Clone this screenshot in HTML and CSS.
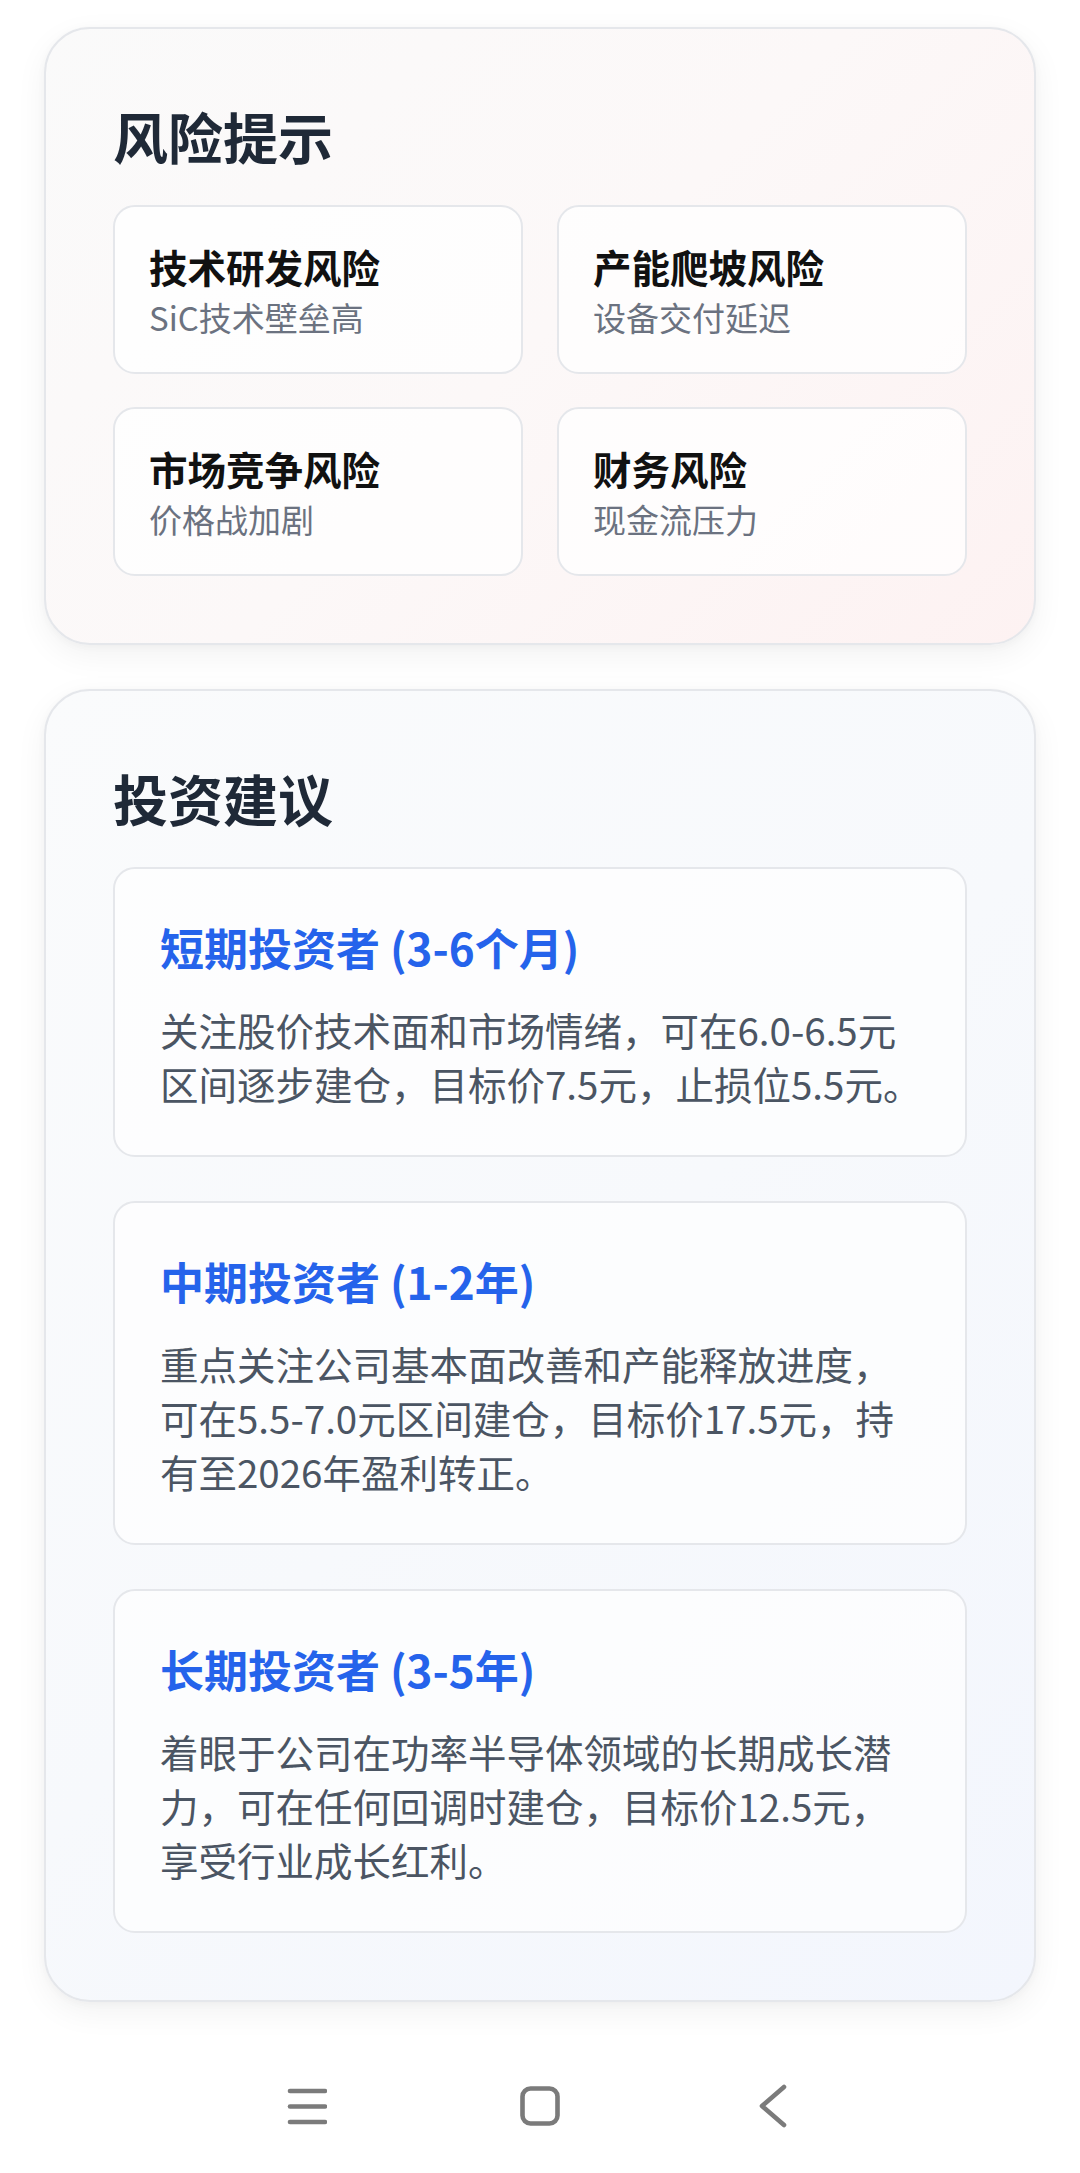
FILE: index.html
```html
<!DOCTYPE html>
<html lang="zh-CN">
<head>
<meta charset="utf-8">
<title>风险提示与投资建议</title>
<link rel="stylesheet" href="styles.css">
</head>
<body>
<main class="page">
  <section class="card card-risk">
    <h2 class="card-title">风险提示</h2>
    <div class="risk-grid">
      <div class="risk-item">
        <div class="risk-name">技术研发风险</div>
        <div class="risk-desc">SiC技术壁垒高</div>
      </div>
      <div class="risk-item">
        <div class="risk-name">产能爬坡风险</div>
        <div class="risk-desc">设备交付延迟</div>
      </div>
      <div class="risk-item">
        <div class="risk-name">市场竞争风险</div>
        <div class="risk-desc">价格战加剧</div>
      </div>
      <div class="risk-item">
        <div class="risk-name">财务风险</div>
        <div class="risk-desc">现金流压力</div>
      </div>
    </div>
  </section>

  <section class="card card-advice">
    <h2 class="card-title">投资建议</h2>
    <div class="advice-list">
      <div class="advice-item">
        <h3 class="advice-title">短期投资者 (3-6个月)</h3>
        <p class="advice-text">关注股价技术面和市场情绪，可在6.0-6.5元区间逐步建仓，目标价7.5元，止损位5.5元。</p>
      </div>
      <div class="advice-item">
        <h3 class="advice-title">中期投资者 (1-2年)</h3>
        <p class="advice-text">重点关注公司基本面改善和产能释放进度，可在5.5-7.0元区间建仓，目标价17.5元，持有至2026年盈利转正。</p>
      </div>
      <div class="advice-item">
        <h3 class="advice-title">长期投资者 (3-5年)</h3>
        <p class="advice-text">着眼于公司在功率半导体领域的长期成长潜力，可在任何回调时建仓，目标价12.5元，享受行业成长红利。</p>
      </div>
    </div>
  </section>
</main>

<nav class="sysnav">
  <div class="nav-slot">
    <svg width="40" height="40" viewBox="0 0 40 40" class="nav-icon">
      <line x1="3" y1="5" x2="38" y2="5"/>
      <line x1="3" y1="20.5" x2="38" y2="20.5"/>
      <line x1="3" y1="36" x2="38" y2="36"/>
    </svg>
  </div>
  <div class="nav-slot">
    <svg width="44" height="44" viewBox="0 0 44 44" class="nav-icon">
      <rect x="4.5" y="4.5" width="35" height="35" rx="8" ry="8"/>
    </svg>
  </div>
  <div class="nav-slot">
    <svg width="40" height="44" viewBox="0 0 40 44" class="nav-icon">
      <polyline points="31,3 9,22 31,41"/>
    </svg>
  </div>
</nav>
</body>
</html>
```

FILE: styles.css
```css
* {
  box-sizing: border-box;
}

html, body {
  margin: 0;
  padding: 0;
  background: #ffffff;
}

body {
  font-family: "Noto Sans CJK SC", "Noto Sans", sans-serif;
  width: 1080px;
  height: 2173px;
  overflow: hidden;
}

.page {
  padding: 27px 44px 0 44px;
  display: flex;
  flex-direction: column;
  gap: 44px;
}

.card {
  border: 2px solid #e5e7eb;
  border-radius: 46px;
  padding: 67px;
  box-shadow: 0 10px 32px rgba(0, 0, 0, 0.055), 0 2px 8px rgba(0, 0, 0, 0.03);
}

.card-risk {
  background: linear-gradient(135deg, #fafafa 0%, #fcf8f8 50%, #fdf2f2 100%);
}

.card-advice {
  background: linear-gradient(135deg, #fafbfc 0%, #f7f9fc 50%, #f3f6fd 100%);
}

.card-title {
  margin: 0 0 31px 0;
  font-size: 55px;
  line-height: 78px;
  font-weight: 700;
  color: #1f2937;
}

.risk-grid {
  display: grid;
  grid-template-columns: 1fr 1fr;
  column-gap: 34px;
  row-gap: 33px;
}

.risk-item {
  background: rgba(255, 255, 255, 0.75);
  border: 2px solid #e5e7eb;
  border-radius: 22px;
  padding: 31px 34px 35px 34px;
  height: 169px;
}

.risk-name {
  font-size: 38.5px;
  line-height: 57px;
  font-weight: 700;
  color: #111111;
}

.risk-desc {
  margin-top: 2px;
  font-size: 33px;
  line-height: 40px;
  color: #6b7280;
}

.advice-list {
  display: flex;
  flex-direction: column;
  gap: 44px;
}

.advice-item {
  background: rgba(255, 255, 255, 0.65);
  border: 2px solid #e5e7eb;
  border-radius: 22px;
  padding: 45px 41px 45px 45px;
}

.advice-title {
  margin: 0 0 22px 0;
  font-size: 44px;
  line-height: 66px;
  font-weight: 700;
  color: #2563eb;
}

.advice-text {
  margin: 0;
  font-size: 38.5px;
  line-height: 54px;
  color: #4b5563;
}

.sysnav {
  margin-top: 39px;
  height: 130px;
  display: flex;
  justify-content: center;
  align-items: center;
  gap: 173px;
}

.nav-slot {
  width: 60px;
  display: flex;
  justify-content: center;
  align-items: center;
}

.nav-icon {
  fill: none;
  stroke: #7b7b7b;
  stroke-width: 4.6;
  stroke-linecap: round;
  stroke-linejoin: round;
}
```
